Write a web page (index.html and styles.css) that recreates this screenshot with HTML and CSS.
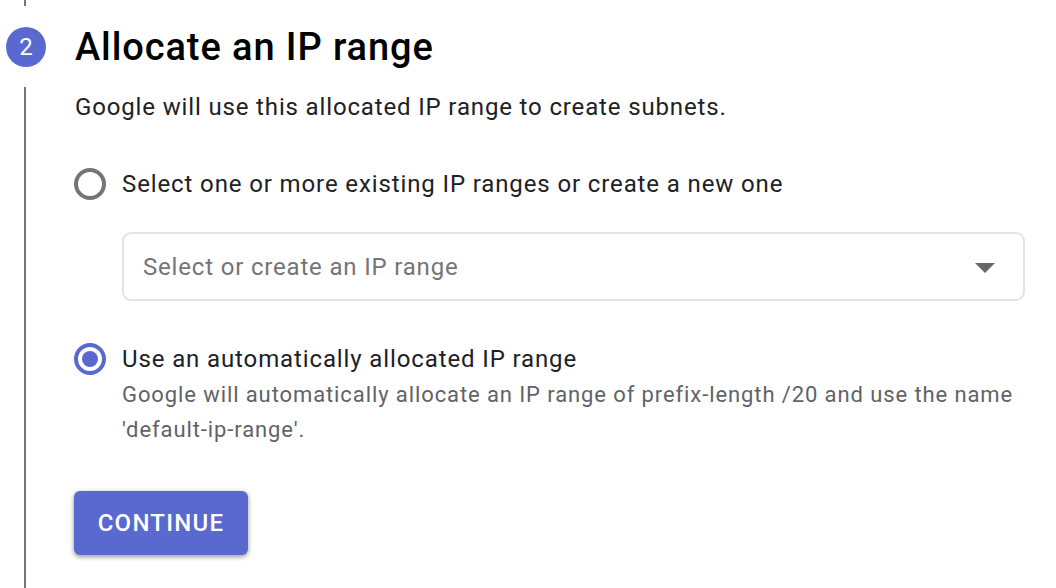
FILE: index.html
```html
<!DOCTYPE html>
<html>
<head>
<meta charset="utf-8">
<link rel="stylesheet" href="styles.css">
</head>
<body>
<div class="step">
  <div class="step-top"></div>
  <div class="step-head">
    <div class="step-num">2</div>
    <h2 class="step-title">Allocate an IP range</h2>
  </div>
  <div class="step-body">
    <p class="intro">Google will use this allocated IP range to create subnets.</p>
    <label class="radio-row first">
      <span class="radio"></span>
      <span class="radio-label">Select one or more existing IP ranges or create a new one</span>
    </label>
    <div class="select">
      <span class="placeholder">Select or create an IP range</span>
      <span class="caret"></span>
    </div>
    <label class="radio-row second">
      <span class="radio checked"></span>
      <span class="radio-label">Use an automatically allocated IP range</span>
    </label>
    <p class="hint">Google will automatically allocate an IP range of prefix-length /20 and use the name 'default-ip-range'.</p>
    <button class="btn">CONTINUE</button>
  </div>
</div>
</body>
</html>
```
FILE: styles.css
```css
html, body {
  margin: 0;
  padding: 0;
  background: #fff;
}
body {
  font-family: Roboto, "Liberation Sans", sans-serif;
  color: #202124;
  width: 1056px;
  height: 588px;
  overflow: hidden;
}
.step {
  height: 588px;
  display: flex;
  flex-direction: column;
}
.step-top {
  margin-left: 24px;
  width: 2px;
  height: 6px;
  background: #757575;
}
.step-head {
  display: flex;
  align-items: center;
  margin-top: 21px;
  height: 40px;
}
.step-num {
  margin-left: 6px;
  width: 40px;
  height: 40px;
  border-radius: 50%;
  background: #5a69cf;
  color: #fff;
  font-size: 24px;
  display: flex;
  align-items: center;
  justify-content: center;
}
.step-title {
  margin: 0 0 0 29px;
  font-size: 38px;
  font-weight: 500;
  letter-spacing: 0.9px;
  color: #000;
  line-height: 40px;
}
.step-body {
  flex: 1;
  margin-top: 20px;
  margin-left: 24px;
  border-left: 2px solid #757575;
  padding-left: 49px;
  padding-top: 2px;
}
.intro {
  margin: 0;
  font-size: 24px;
  line-height: 36px;
  letter-spacing: 0.85px;
  color: #202124;
}
.radio-row {
  display: flex;
  align-items: center;
  height: 36px;
}
.radio-row.first { margin-top: 41px; }
.radio-row.second { margin-top: 40px; }
.radio {
  box-sizing: border-box;
  width: 32px;
  height: 32px;
  border: 4px solid #757575;
  border-radius: 50%;
  margin-left: -1px;
  margin-right: 16px;
  display: flex;
  align-items: center;
  justify-content: center;
  flex-shrink: 0;
}
.radio.checked {
  border-color: #5a69cf;
}
.radio.checked::after {
  content: "";
  width: 16px;
  height: 16px;
  border-radius: 50%;
  background: #5a69cf;
}
.radio-label {
  font-size: 24px;
  letter-spacing: 0.88px;
  color: #202124;
}
.select {
  box-sizing: border-box;
  margin: 30px 0 0 47px;
  width: 903px;
  height: 69px;
  border: 2px solid #e3e3e3;
  border-radius: 9px;
  display: flex;
  align-items: center;
  justify-content: space-between;
  padding: 0 28px 0 19px;
}
.placeholder {
  font-size: 24px;
  letter-spacing: 0.82px;
  color: #757575;
}
.caret {
  width: 0;
  height: 0;
  border-left: 10px solid transparent;
  border-right: 10px solid transparent;
  border-top: 10px solid #666;
  margin-top: 2px;
}
.hint {
  margin: 0 0 0 47px;
  width: 903px;
  font-size: 22px;
  line-height: 35px;
  letter-spacing: 0.9px;
  color: #5f6368;
}
.btn {
  display: block;
  margin-top: 44px;
  margin-left: -1px;
  width: 174px;
  height: 64px;
  border: none;
  border-radius: 6px;
  background: #5a69cf;
  color: #fff;
  font-family: Roboto, "Liberation Sans", sans-serif;
  font-size: 24px;
  font-weight: 500;
  letter-spacing: 1.25px;
  box-shadow: 0 2px 4px rgba(0,0,0,0.3), 0 1px 6px rgba(0,0,0,0.15);
  padding: 0;
}
```
